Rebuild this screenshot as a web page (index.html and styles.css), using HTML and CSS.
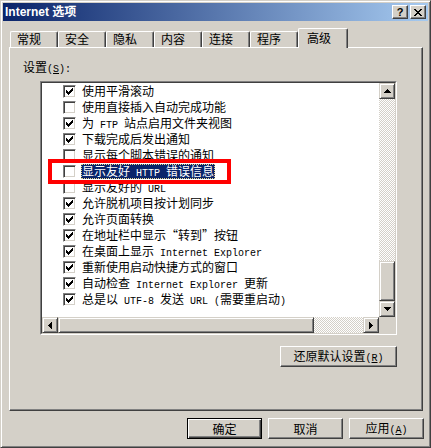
FILE: index.html
```html
<!DOCTYPE html>
<html lang="zh-CN">
<head>
    <meta charset="UTF-8">
    <title>Internet 选项</title>
    <link rel="stylesheet" href="styles.css">
</head>
<body>
    <div class="window">
        <!-- Barra de título -->
        <div class="titlebar">
            <span class="title">Internet 选项</span>
            <div class="caption-buttons">
                <span class="cap-btn">?</span>
                <span class="cap-btn">
                    <svg width="8" height="7" viewBox="0 0 8 7" shape-rendering="crispEdges"><path d="M0 0h2v1h-2z M6 0h2v1h-2z M1 1h2v1h-2z M5 1h2v1h-2z M2 2h4v1h-4z M3 3h2v1h-2z M2 4h4v1h-4z M1 5h2v1h-2z M5 5h2v1h-2z M0 6h2v1h-2z M6 6h2v1h-2z" fill="#000"/></svg>
                </span>
            </div>
        </div>

        <!-- Pestañas -->
        <div class="tabs">
            <div class="tab">常规</div>
            <div class="tab">安全</div>
            <div class="tab">隐私</div>
            <div class="tab">内容</div>
            <div class="tab">连接</div>
            <div class="tab">程序</div>
            <div class="tab active">高级</div>
        </div>

        <div class="panel">
            <div class="label">设置<span class="en">(<u>S</u>):</span></div>

            <div class="listbox">
                <div class="listbox-inner">
                    <ul class="items">
                        <li class="item"><span class="cb checked"></span><span class="text">使用平滑滚动</span></li>
                        <li class="item"><span class="cb"></span><span class="text">使用直接插入自动完成功能</span></li>
                        <li class="item"><span class="cb checked"></span><span class="text"><span>为</span><span class="en"> FTP </span><span>站点启用文件夹视图</span></span></li>
                        <li class="item"><span class="cb checked"></span><span class="text">下载完成后发出通知</span></li>
                        <li class="item"><span class="cb"></span><span class="text">显示每个脚本错误的通知</span></li>
                        <li class="item"><span class="cb"></span><span class="text selected"><span>显示友好</span><span class="en"> HTTP </span><span>错误信息</span></span></li>
                        <li class="item"><span class="cb"></span><span class="text"><span>显示友好的</span><span class="en"> URL</span></span></li>
                        <li class="item"><span class="cb checked"></span><span class="text">允许脱机项目按计划同步</span></li>
                        <li class="item"><span class="cb checked"></span><span class="text">允许页面转换</span></li>
                        <li class="item"><span class="cb checked"></span><span class="text">在地址栏中显示“转到”按钮</span></li>
                        <li class="item"><span class="cb checked"></span><span class="text"><span>在桌面上显示</span><span class="en"> Internet Explorer</span></span></li>
                        <li class="item"><span class="cb checked"></span><span class="text">重新使用启动快捷方式的窗口</span></li>
                        <li class="item"><span class="cb checked"></span><span class="text"><span>自动检查</span><span class="en"> Internet Explorer </span><span>更新</span></span></li>
                        <li class="item"><span class="cb checked"></span><span class="text"><span>总是以</span><span class="en"> UTF-8 </span><span>发送</span><span class="en"> URL (</span><span>需要重启动</span><span class="en">)</span></span></li>
                    </ul>

                    <div class="vscroll">
                        <span class="sb-btn">
                            <svg width="7" height="4" viewBox="0 0 7 4" shape-rendering="crispEdges"><path d="M3 0h1v1h-1z M2 1h3v1h-3z M1 2h5v1h-5z M0 3h7v1h-7z" fill="#000"/></svg>
                        </span>
                        <span class="track"></span>
                        <span class="thumb v"></span>
                        <span class="sb-btn">
                            <svg width="7" height="4" viewBox="0 0 7 4" shape-rendering="crispEdges"><path d="M0 0h7v1h-7z M1 1h5v1h-5z M2 2h3v1h-3z M3 3h1v1h-1z" fill="#000"/></svg>
                        </span>
                    </div>

                    <div class="hscroll">
                        <span class="sb-btn">
                            <svg width="4" height="7" viewBox="0 0 4 7" shape-rendering="crispEdges"><path d="M3 0h1v7h-1z M2 1h1v5h-1z M1 2h1v3h-1z M0 3h1v1h-1z" fill="#000"/></svg>
                        </span>
                        <span class="thumb h"></span>
                        <span class="track"></span>
                        <span class="sb-btn">
                            <svg width="4" height="7" viewBox="0 0 4 7" shape-rendering="crispEdges"><path d="M0 0h1v7h-1z M1 1h1v5h-1z M2 2h1v3h-1z M3 3h1v1h-1z" fill="#000"/></svg>
                        </span>
                    </div>

                    <div class="corner"></div>
                </div>

                <!-- Marca roja sobre la opción -->
                <div class="mark"></div>
            </div>

            <div class="reset-row">
                <button class="btn reset">还原默认设置<span class="en">(<u>R</u>)</span></button>
            </div>
        </div>

        <div class="footer">
            <button class="btn default">确定</button>
            <button class="btn">取消</button>
            <button class="btn">应用<span class="en">(<u>A</u>)</span></button>
        </div>
    </div>

    <script>
        // Marcas de verificación dibujadas como en Windows clásico
        const tick = '<svg width="7" height="7" viewBox="0 0 7 7" shape-rendering="crispEdges"><path d="M0 2h1v3h-1z M1 3h1v3h-1z M2 4h1v3h-1z M3 3h1v3h-1z M4 2h1v3h-1z M5 1h1v3h-1z M6 0h1v3h-1z" fill="#000"/></svg>';
        document.querySelectorAll('.cb.checked').forEach(cb => {
            cb.innerHTML = tick;
        });
    </script>
</body>
</html>
```

FILE: styles.css
```css
* {
    box-sizing: border-box;
}

body {
    margin: 0;
    padding: 0;
    background: #d4d0c8;
    font-family: 'Noto Sans CJK SC', sans-serif;
    font-size: 12px;
    color: #000;
}

.en {
    font-family: 'Liberation Mono', monospace;
    font-size: 10px;
    line-height: 10px;
    white-space: pre;
}

u {
    text-decoration: underline;
}

.window {
    width: 431px;
    height: 448px;
    padding: 2px;
    background: #d4d0c8;
    border: 1px solid;
    border-color: #d4d0c8 #404040 #404040 #d4d0c8;
    box-shadow: inset 1px 1px #fff, inset -1px -1px #808080;
}

/* ===== BARRA DE TÍTULO ===== */
.titlebar {
    height: 18px;
    display: flex;
    align-items: center;
    justify-content: space-between;
    padding: 0 2px;
    background: linear-gradient(to right, #0a246a, #a6caf0);
}

.title {
    color: #fff;
    font-family: 'Liberation Sans', 'Noto Sans CJK SC', sans-serif;
    font-weight: bold;
    font-size: 12px;
    line-height: 18px;
}

.caption-buttons {
    display: flex;
    gap: 2px;
}

.cap-btn {
    width: 16px;
    height: 14px;
    display: flex;
    align-items: center;
    justify-content: center;
    background: #d4d0c8;
    border: 1px solid;
    border-color: #fff #404040 #404040 #fff;
    box-shadow: inset -1px -1px #808080;
    font-family: 'Liberation Sans', sans-serif;
    font-weight: bold;
    font-size: 11px;
    line-height: 12px;
}

/* ===== PESTAÑAS ===== */
.tabs {
    display: flex;
    align-items: flex-end;
    height: 20px;
    margin: 7px 0 -1px 7px;
    position: relative;
    z-index: 1;
}

.tab {
    width: 48px;
    height: 16px;
    margin-bottom: 1px;
    padding-left: 6px;
    line-height: 14px;
    background: #d4d0c8;
    border-top: 1px solid #fff;
    border-left: 1px solid #fff;
    border-right: 1px solid #404040;
    box-shadow: inset -1px 0 #808080;
    border-radius: 2px 2px 0 0;
}

.tab.active {
    width: 50px;
    height: 20px;
    margin-bottom: 0;
    padding: 2px 0 0 8px;
}

/* ===== PANEL ===== */
.panel {
    width: 414px;
    height: 364px;
    margin-left: 6px;
    padding: 12px 0 0 13px;
    border: 1px solid;
    border-color: #fff #404040 #404040 #fff;
    box-shadow: inset -1px -1px #808080;
}

.label {
    line-height: 14px;
}

.listbox {
    position: relative;
    width: 357px;
    height: 254px;
    margin: 6px 0 0 17px;
    border: 1px solid;
    border-color: #808080 #fff #fff #808080;
}

.listbox-inner {
    width: 100%;
    height: 100%;
    display: grid;
    grid-template-columns: 1fr 16px;
    grid-template-rows: 1fr 16px;
    background: #fff;
    border: 1px solid;
    border-color: #404040 #d4d0c8 #d4d0c8 #404040;
}

.items {
    list-style: none;
    margin: 0;
    padding: 0;
    overflow: hidden;
}

.item {
    display: flex;
    align-items: center;
    height: 16px;
    padding-left: 21px;
    white-space: nowrap;
}

.cb {
    width: 13px;
    height: 13px;
    flex-shrink: 0;
    display: flex;
    align-items: center;
    justify-content: center;
    background: #fff;
    border: 1px solid;
    border-color: #808080 #fff #fff #808080;
    box-shadow: inset 1px 1px #404040, inset -1px -1px #d4d0c8;
}

.text {
    margin-left: 6px;
    line-height: 14px;
}

.text.selected {
    margin-left: 5px;
    padding: 0 1px;
    background: #0a246a;
    color: #fff;
    outline: 1px dotted #e8d890;
    outline-offset: -1px;
}

/* ===== BARRAS DE DESPLAZAMIENTO ===== */
.vscroll {
    display: flex;
    flex-direction: column;
}

.hscroll {
    display: flex;
}

.sb-btn,
.thumb {
    width: 16px;
    height: 16px;
    flex-shrink: 0;
    display: flex;
    align-items: center;
    justify-content: center;
    background: #d4d0c8;
    border: 1px solid;
    border-color: #d4d0c8 #404040 #404040 #d4d0c8;
    box-shadow: inset 1px 1px #fff, inset -1px -1px #808080;
}

.thumb.v {
    height: 40px;
}

.thumb.h {
    width: 256px;
}

.track {
    flex: 1;
    background: repeating-conic-gradient(#d4d0c8 0 25%, #fff 0 50%) 0 0 / 2px 2px;
}

.corner {
    background: #d4d0c8;
}

.mark {
    position: absolute;
    left: 7px;
    top: 77px;
    width: 183px;
    height: 25px;
    border: 4px solid #ff0000;
}

/* ===== BOTONES ===== */
.reset-row {
    width: 357px;
    margin: 11px 0 0 17px;
    display: flex;
    justify-content: flex-end;
}

.btn {
    width: 75px;
    height: 21px;
    padding: 0;
    font-family: 'Noto Sans CJK SC', sans-serif;
    font-size: 12px;
    line-height: 14px;
    color: #000;
    background: #d4d0c8;
    border: 1px solid;
    border-color: #fff #404040 #404040 #fff;
    box-shadow: inset -1px -1px #808080;
}

.btn.reset {
    width: 117px;
}

.btn.default {
    border-color: #000;
    box-shadow: inset 1px 1px #fff, inset -1px -1px #404040, inset -2px -2px #808080;
}

.footer {
    display: flex;
    justify-content: flex-end;
    gap: 6px;
    margin-top: 7px;
    padding-right: 4px;
}
```
